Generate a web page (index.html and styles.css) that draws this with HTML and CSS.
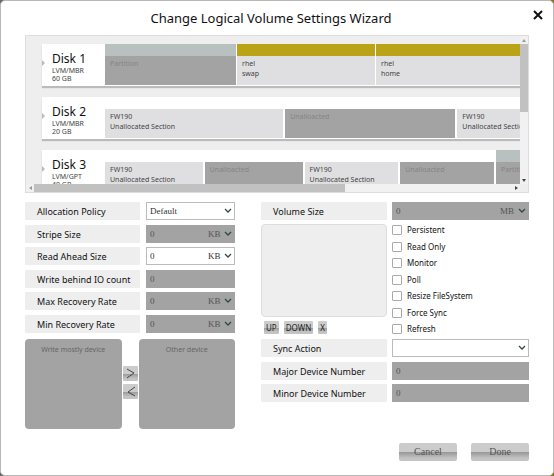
FILE: index.html
```html
<!DOCTYPE html>
<html lang="en">
<head>
<meta charset="utf-8">
<title>Change Logical Volume Settings Wizard</title>
<link rel="stylesheet" href="styles.css">
</head>
<body>
<svg class="defs" aria-hidden="true"><symbol id="chevron" viewBox="0 0 8 6"><path d="M1 1 4 4 7 1" fill="none" stroke="#2f4a42" stroke-width="1.3"/></symbol></svg>
<main class="dialog">
  <header class="header">
    <h1>Change Logical Volume Settings Wizard</h1>
    <button class="close" aria-label="Close"><svg viewBox="0 0 10 10"><path d="M1 1 9 9M9 1 1 9" stroke="#111" stroke-width="2"/></svg></button>
  </header>

  <section class="disks" aria-label="Disks">
    <div class="viewport">
      <article class="disk">
        <div class="disk-info"><svg class="marker" viewBox="0 0 4 6"><path d="M0 0 3 3 0 6" fill="#bbb"/></svg><h2>Disk 1</h2><p>LVM/MBR</p><p>60 GB</p></div>
        <div class="segments disk-one">
          <div class="segment used off"><p>Partition</p></div>
          <div class="segment volume"><p>rhel</p><p>swap</p></div>
          <div class="segment volume"><p>rhel</p><p>home</p></div>
        </div>
      </article>
      <article class="disk">
        <div class="disk-info"><svg class="marker" viewBox="0 0 4 6"><path d="M0 0 3 3 0 6" fill="#bbb"/></svg><h2>Disk 2</h2><p>LVM/MBR</p><p>20 GB</p></div>
        <div class="segments disk-two">
          <div class="segment"><p>FW190</p><p>Unallocated Section</p></div>
          <div class="segment off"><p>Unalloacted</p></div>
          <div class="segment"><p>FW190</p><p>Unallocated Section</p></div>
        </div>
      </article>
      <article class="disk">
        <div class="disk-info"><svg class="marker" viewBox="0 0 4 6"><path d="M0 0 3 3 0 6" fill="#bbb"/></svg><h2>Disk 3</h2><p>LVM/GPT</p><p>40 GB</p></div>
        <div class="segments disk-three">
          <div class="segment"><p>FW190</p><p>Unallocated Section</p></div>
          <div class="segment off"><p>Unalloacted</p></div>
          <div class="segment"><p>FW190</p><p>Unallocated Section</p></div>
          <div class="segment off"><p>Unalloacted</p></div>
          <div class="segment used off"><p>Partition</p></div>
        </div>
      </article>
    </div>
    <div class="bar vertical"><svg viewBox="0 0 8 8"><path d="M2 6 4 3 6 6" fill="#999"/></svg><i class="thumb"></i><svg viewBox="0 0 8 8"><path d="M2 3 4 6 6 3" fill="#444"/></svg></div>
    <div class="bar horizontal"><svg viewBox="0 0 8 8"><path d="M6 2 3 4 6 6" fill="#999"/></svg><i class="thumb"></i><svg viewBox="0 0 8 8"><path d="M3 2 6 4 3 6" fill="#444"/></svg></div>
  </section>

  <form class="form">
    <div class="column">
      <div class="rows six">
        <div class="row"><label for="policy">Allocation Policy</label><div class="field"><select id="policy" class="wide"><option>Default</option></select><svg class="chev"><use href="#chevron"/></svg></div></div>
        <div class="row"><label for="stripe">Stripe Size</label><div class="field off"><input id="stripe" value="0" disabled><select aria-label="Stripe unit" disabled><option>KB</option></select><svg class="chev"><use href="#chevron"/></svg></div></div>
        <div class="row"><label for="ahead">Read Ahead Size</label><div class="field"><input id="ahead" value="0"><select aria-label="Read ahead unit"><option>KB</option></select><svg class="chev"><use href="#chevron"/></svg></div></div>
        <div class="row"><label for="behind">Write behind IO count</label><div class="field off"><input id="behind" value="0" disabled></div></div>
        <div class="row"><label for="max">Max Recovery Rate</label><div class="field off"><input id="max" value="0" disabled><select aria-label="Max rate unit" disabled><option>KB</option></select><svg class="chev"><use href="#chevron"/></svg></div></div>
        <div class="row"><label for="min">Min Recovery Rate</label><div class="field off"><input id="min" value="0" disabled><select aria-label="Min rate unit" disabled><option>KB</option></select><svg class="chev"><use href="#chevron"/></svg></div></div>
      </div>
      <div class="transfer">
        <div class="devices">Write mostly device</div>
        <div class="arrows">
          <button type="button" aria-label="Move right"><svg viewBox="0 0 15 15"><path d="M4 3 11 7 4 12" fill="none" stroke="#444"/></svg></button>
          <button type="button" aria-label="Move left"><svg viewBox="0 0 15 15"><path d="M12 3 5 8 12 12" fill="none" stroke="#444"/></svg></button>
        </div>
        <div class="devices">Other device</div>
      </div>
    </div>

    <div class="column">
      <div class="row"><label for="size">Volume Size</label><div class="field off"><input id="size" value="0" disabled><select aria-label="Volume unit" disabled><option>MB</option></select><svg class="chev"><use href="#chevron"/></svg></div></div>
      <div class="row options">
        <div class="order">
          <div class="list"></div>
          <div class="order-buttons"><button type="button">UP</button><button type="button">DOWN</button><button type="button">X</button></div>
        </div>
        <div class="checks">
          <label><input type="checkbox">Persistent</label>
          <label><input type="checkbox">Read Only</label>
          <label><input type="checkbox">Monitor</label>
          <label><input type="checkbox">Poll</label>
          <label><input type="checkbox">Resize FileSystem</label>
          <label><input type="checkbox">Force Sync</label>
          <label><input type="checkbox">Refresh</label>
        </div>
      </div>
      <div class="rows three">
        <div class="row"><label for="sync">Sync Action</label><div class="field"><select id="sync" class="wide"><option></option></select><svg class="chev"><use href="#chevron"/></svg></div></div>
        <div class="row"><label for="major">Major Device Number</label><div class="field off"><input id="major" value="0" disabled></div></div>
        <div class="row"><label for="minor">Minor Device Number</label><div class="field off"><input id="minor" value="0" disabled></div></div>
      </div>
    </div>
  </form>

  <footer class="footer"><button type="button">Cancel</button><button type="button">Done</button></footer>
</main>
</body>
</html>
```
FILE: styles.css
```css
* { box-sizing: border-box; }
body { margin: 0; background: linear-gradient(90deg, #666 95%, #8a7410 95%); font: 9px/12px "Noto Sans", "Open Sans", sans-serif; color: #222; }
h1, h2, p { margin: 0; font-weight: 400; }
button { padding: 0; border: 0; font: inherit; color: inherit; }
svg { display: block; }
.defs { position: absolute; width: 0; height: 0; }
.dialog { display: flex; flex-direction: column; min-height: 100vh; padding: 0 24px 14px; background: #fff; border: 1px solid #b8b8b8; border-radius: 5px; }

.header { position: relative; height: 34px; display: flex; justify-content: center; padding-right: 12px; }
h1 { margin-top: 7px; font-size: 13px; line-height: 20px; color: #111; }
.close { position: absolute; top: 9px; right: -14px; width: 10px; height: 10px; background: none; }

.disks { display: grid; grid-template: 148px 8px / 1fr 8px; border: 1px solid #ddd; background: #eee; }
.viewport { overflow: hidden; padding: 8px 0 0 16px; display: flex; flex-direction: column; gap: 11px; }
.disk { flex: none; display: grid; grid-template-columns: 63px 1fr; height: 42px; padding-bottom: 1px; background: #fff; box-shadow: 0 2px 1px #bbb; }
.disk-info { position: relative; padding: 7px 0 0 10px; font-size: 7px; line-height: 8px; color: #444; }
.disk-info h2 { font-size: 12px; line-height: 16px; color: #111; }
.marker { position: absolute; left: 0; top: 16px; width: 4px; height: 6px; }
.segments { display: grid; column-gap: 2px; min-width: 0; overflow: hidden; }
.disk-one { grid-template-columns: 131fr 138fr 144fr; column-gap: 1px; }
.disk-two { grid-template-columns: 179fr 171fr 63fr; }
.disk-three { grid-template-columns: 98fr 98fr 94fr 94fr 24fr; }
.segment { min-width: 0; padding: 3px 0 0 5px; border-top: 12px solid #fff; background: #dfdfe1; font-size: 7px; line-height: 10px; white-space: nowrap; overflow: hidden; color: #444; }
.segment.off { background: #a3a3a3; color: #858585; }
.segment.used { border-color: #b8c1c0; }
.segment.volume { border-color: #bba318; }
.bar { display: flex; background: #f1f1f1; }
.bar svg { flex: none; width: 8px; height: 8px; }
.bar svg:last-child { margin: auto 0 0 auto; }
.thumb { background: #c1c1c1; }
.vertical { flex-direction: column; }
.vertical .thumb { height: 68px; }
.horizontal .thumb { width: 63%; }

.form { display: grid; grid-template-columns: 210fr 268fr; column-gap: 26px; padding-top: 9px; }
.column { display: flex; flex-direction: column; }
.rows { display: flex; flex-direction: column; justify-content: space-between; }
.six { height: 131px; }
.three { height: 63px; margin-top: 4px; }
.row { display: grid; grid-template-columns: 115fr 89fr; column-gap: 6px; }
.column:last-child .row { grid-template-columns: 126fr 137fr; column-gap: 5px; }
.row > label { height: 18px; padding-left: 12px; line-height: 19px; background: #eee; border-radius: 1px; color: #111; white-space: nowrap; }
.field { display: flex; align-items: center; height: 18px; min-width: 0; padding: 0 2px 0 3px; border: 1px solid #bbb; background: #fff; }
.field.off { border-color: #a3a3a3; background: #a3a3a3; }
.field input, .field select { min-width: 0; height: 14px; padding: 0; border: 0; background: none; appearance: none; font: 9px/14px "Liberation Serif", serif; color: #333; opacity: 1; }
.field input, .field .wide { flex: 1; }
.field.off input, .field.off select { color: #555; }
.chev { flex: none; width: 8px; height: 6px; margin-left: 3px; }

.transfer { display: grid; grid-template-columns: 1fr 15px 1fr; column-gap: 1px; margin-top: 6px; }
.devices { height: 90px; padding-top: 5px; border-radius: 4px; background: #a3a3a3; color: #666; font-size: 7px; line-height: 12px; text-align: center; }
.arrows { display: flex; flex-direction: column; gap: 3px; padding-top: 27px; }
.arrows button, .order-buttons button, .footer button { background: linear-gradient(#ccc 50%, #999 52%, #c4c4c4 85%); border-radius: 1px; }
.arrows button { height: 15px; }

.options { margin-top: 4px; }
.order { display: flex; flex-direction: column; }
.list { height: 93px; border: 1px solid #ddd; border-radius: 4px; background: #eee; }
.order-buttons { display: flex; gap: 5px; padding: 4px 0 0 3px; }
.order-buttons button { height: 13px; padding: 0 2px; font-size: 8px; line-height: 13px; }
.checks { display: flex; flex-direction: column; justify-content: space-between; height: 111px; font-size: 8px; color: #111; }
.checks label { display: flex; align-items: center; gap: 5px; }
.checks input { appearance: none; width: 10px; height: 10px; margin: 0; border: 1px solid #aaa; background: #fff; border-radius: 1px; }

.footer { display: flex; justify-content: flex-end; gap: 14px; margin-top: auto; }
.footer button { width: 58px; height: 18px; border-radius: 2px; font: 10px/18px "Liberation Serif", serif; color: #555; }
```
